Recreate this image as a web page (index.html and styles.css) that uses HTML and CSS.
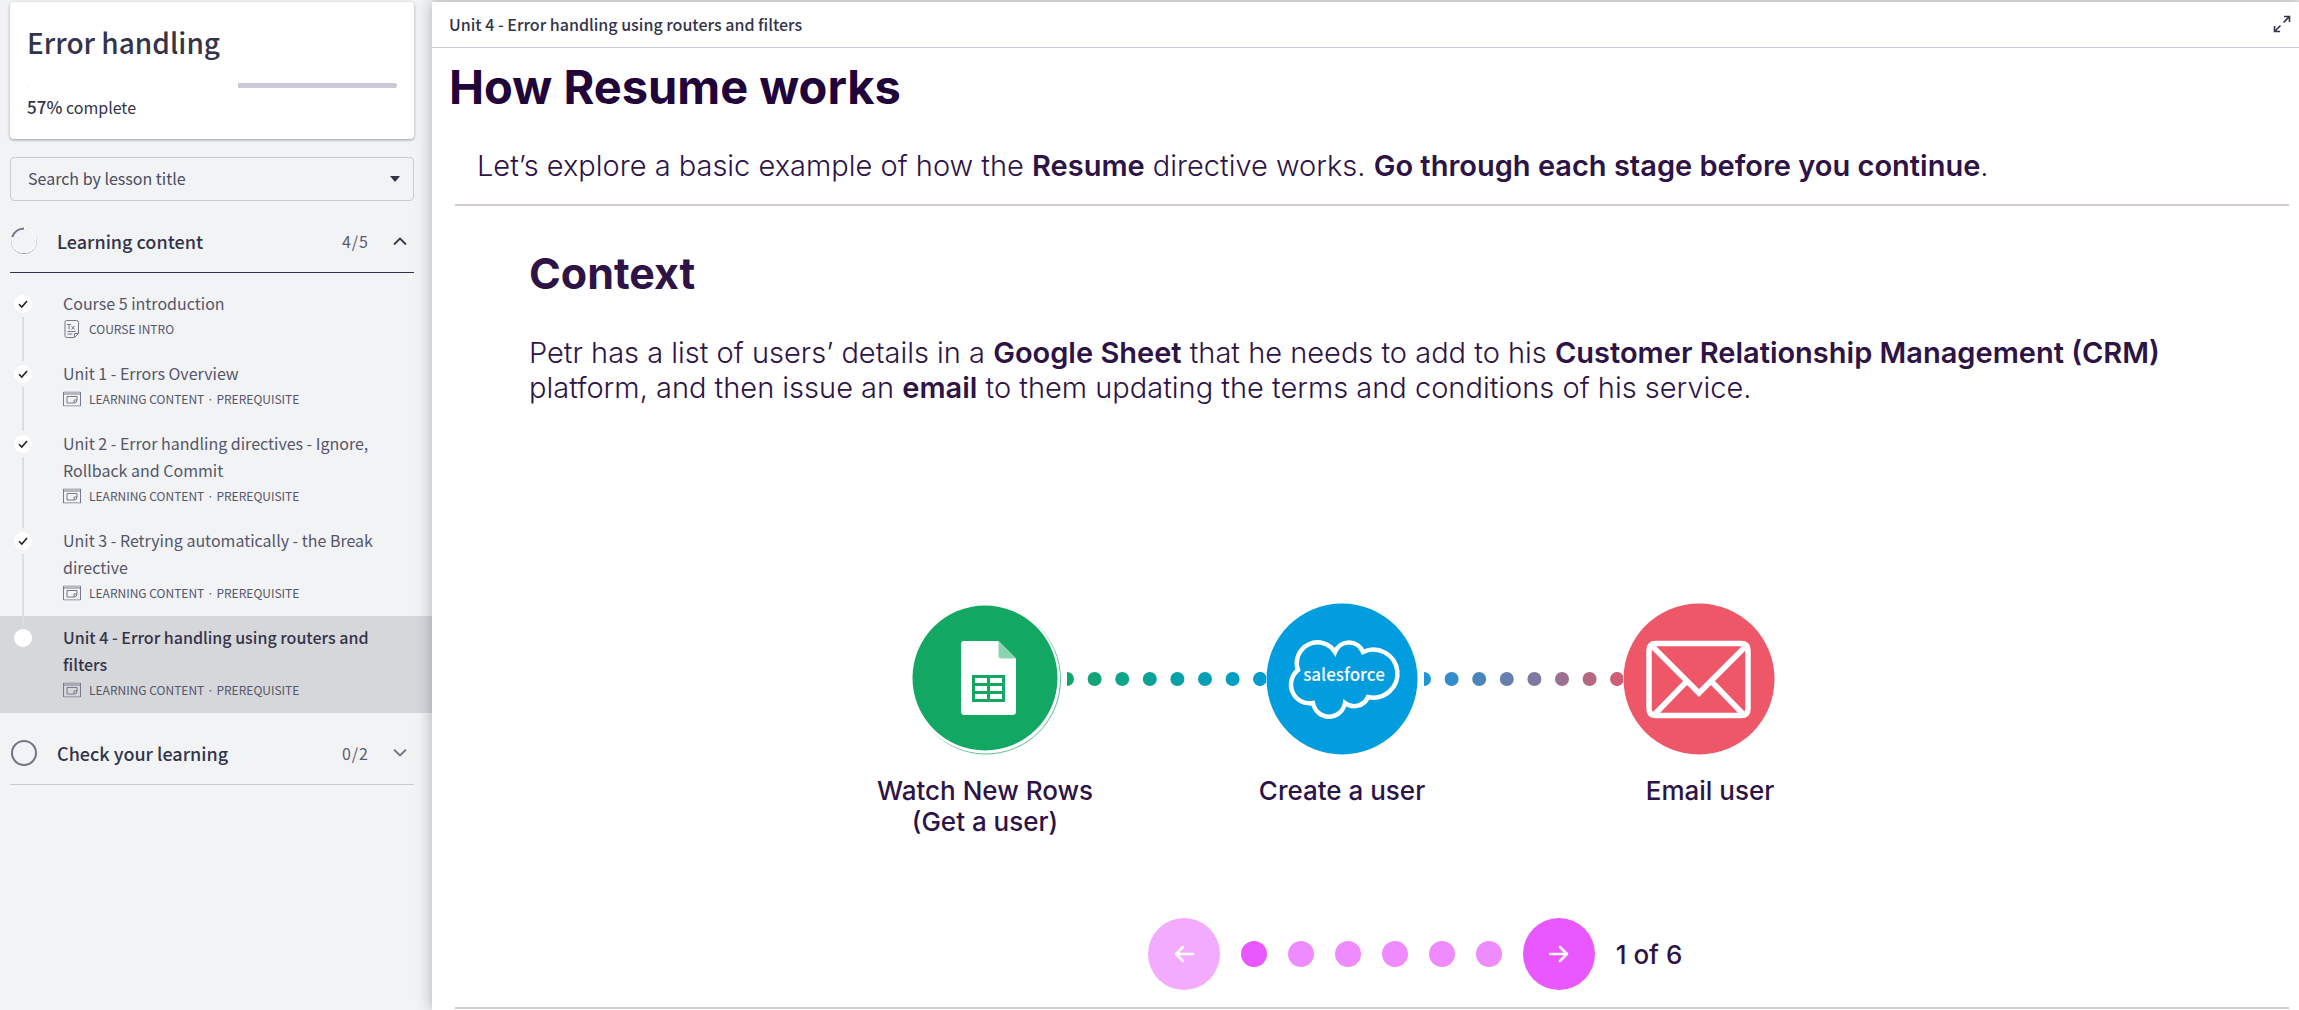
FILE: index.html
```html
<!DOCTYPE html>
<html lang="en">
<head>
<meta charset="utf-8">
<meta name="viewport" content="width=device-width, initial-scale=1">
<title>Error handling</title>
<link rel="stylesheet" href="styles.css">
</head>
<body>
<svg class="symbols" aria-hidden="true">
  <symbol id="check" viewBox="0 0 10 10"><path d="M1 5.2 3.8 8 9 2" fill="none" stroke="currentColor" stroke-width="1.6"/></symbol>
  <symbol id="slides" viewBox="0 0 18 15"><path d="M.5 .5h17v14H.5zM.5 2.5h17M4 5h10v3.500q0 3-3 3H4zM11 11.500v-3h3" fill="none" stroke="currentColor"/></symbol>
</svg>
<div class="layout">
  <aside class="sidebar">
    <section class="course">
      <h1 class="course-title">Error handling</h1>
      <progress class="course-bar" max="100" value="57" aria-label="Course progress"></progress>
      <p class="course-status"><b>57%</b> complete</p>
    </section>
    <div class="search">
      <select class="search-select" aria-label="Search by lesson title"><option>Search by lesson title</option></select>
      <svg class="search-caret" viewBox="0 0 10 6" aria-hidden="true"><path d="M0 0h10L5 6z" fill="currentColor"/></svg>
    </div>
    <button class="section section-open" type="button" aria-expanded="true">
      <svg class="ring" viewBox="0 0 28 28" aria-hidden="true"><circle cx="14" cy="14" r="12.500" fill="none" stroke="#8c8d9c"/><circle cx="14" cy="13.500" r="12" fill="none" stroke="#fff" stroke-width="1.500"/><path d="M2.300 10A12.500 12.500 0 0 1 14 1.500" fill="none" stroke="#727386" stroke-width="2"/></svg>
      <span class="section-name">Learning content</span>
      <span class="section-count">4/5</span>
      <svg class="chevron" viewBox="0 0 14 8" aria-hidden="true"><path d="M1 7.500 7 1.500l6 6" fill="none" stroke="currentColor" stroke-width="1.800"/></svg>
    </button>
    <ol class="lessons">
      <li><a class="lesson" href="#intro">
        <span class="track"><span class="mark"><svg viewBox="0 0 10 10"><use href="#check"/></svg></span></span>
        <span class="lesson-body"><span class="lesson-title">Course 5 introduction</span>
        <span class="meta"><svg class="meta-icon" viewBox="0 0 18 18"><path d="M3.500 .5h10q2 0 2 2v11l-4 4h-8q-1.500 0-1.500-1.500V2q0-1.500 1.500-1.500zM11.500 17v-3.500h4M4 4.500h4M6 4.500v5M8.500 6l3 3.500M11.500 6l-3 3.500M4.500 11.500h8M4.500 14h5" fill="none" stroke="currentColor"/></svg>COURSE INTRO</span></span></a></li>
      <li><a class="lesson" href="#unit1">
        <span class="track"><span class="mark"><svg viewBox="0 0 10 10"><use href="#check"/></svg></span></span>
        <span class="lesson-body"><span class="lesson-title">Unit 1 - Errors Overview</span>
        <span class="meta"><svg class="meta-icon" viewBox="0 0 18 15"><use href="#slides"/></svg>LEARNING CONTENT · PREREQUISITE</span></span></a></li>
      <li><a class="lesson" href="#unit2">
        <span class="track"><span class="mark"><svg viewBox="0 0 10 10"><use href="#check"/></svg></span></span>
        <span class="lesson-body"><span class="lesson-title">Unit 2 - Error handling directives - Ignore, Rollback and Commit</span>
        <span class="meta"><svg class="meta-icon" viewBox="0 0 18 15"><use href="#slides"/></svg>LEARNING CONTENT · PREREQUISITE</span></span></a></li>
      <li><a class="lesson" href="#unit3">
        <span class="track"><span class="mark"><svg viewBox="0 0 10 10"><use href="#check"/></svg></span></span>
        <span class="lesson-body"><span class="lesson-title">Unit 3 - Retrying automatically - the Break directive</span>
        <span class="meta"><svg class="meta-icon" viewBox="0 0 18 15"><use href="#slides"/></svg>LEARNING CONTENT · PREREQUISITE</span></span></a></li>
      <li><a class="lesson lesson-current" href="#unit4" aria-current="page">
        <span class="track"><span class="mark"></span></span>
        <span class="lesson-body"><span class="lesson-title">Unit 4 - Error handling using routers and filters</span>
        <span class="meta"><svg class="meta-icon" viewBox="0 0 18 15"><use href="#slides"/></svg>LEARNING CONTENT · PREREQUISITE</span></span></a></li>
    </ol>
    <button class="section" type="button" aria-expanded="false">
      <svg class="ring" viewBox="0 0 28 28" aria-hidden="true"><circle cx="14" cy="14" r="12" fill="none" stroke="#727386" stroke-width="2"/></svg>
      <span class="section-name">Check your learning</span>
      <span class="section-count">0/2</span>
      <svg class="chevron" viewBox="0 0 14 8" aria-hidden="true"><path d="M1 .5 7 6.500l6-6" fill="none" stroke="#727386" stroke-width="1.800"/></svg>
    </button>
  </aside>
  <main class="main">
    <header class="topbar">
      <span>Unit 4 - Error handling using routers and filters</span>
      <button class="expand" type="button" aria-label="Full screen"><svg viewBox="0 0 18 18"><path d="M10.500 7.500 16 2M11 1.500h5.500V7M7.500 10.500 2 16M1.500 11v5.500H7" fill="none" stroke="currentColor" stroke-width="1.600"/></svg></button>
    </header>
    <article class="content">
      <h2 class="page-title">How Resume works</h2>
      <p class="intro">Let’s explore a basic example of how the <b>Resume</b> directive works. <b>Go through each stage before you continue</b>.</p>
      <section class="stage">
        <div class="context">
          <h3 class="stage-title">Context</h3>
          <p class="stage-text">Petr has a list of users’ details in a <b>Google Sheet</b> that he needs to add to his <b>Customer Relationship Management (CRM)</b> platform, and then issue an <b>email</b> to them updating the terms and conditions of his service.</p>
        </div>
        <div class="flow">
          <figure class="step">
            <svg class="step-icon" viewBox="0 0 152 152" aria-hidden="true">
              <circle cx="77" cy="76.500" r="74.500" fill="#fff" stroke="#12a762" stroke-width=".7"/>
              <circle cx="75.500" cy="75" r="75" fill="#fff"/>
              <circle cx="76" cy="75" r="72.500" fill="#12a762"/>
              <path d="M54.500 38h35L107 55.500v53q0 3.500-3.500 3.500H55.500q-3.500 0-3.500-3.500V41.500q0-3.500 2.500-3.500z" fill="#fff"/>
              <path d="M89.500 38 107 55.500H93Q89.500 55.500 89.500 52z" fill="#8bd3b1"/>
              <path d="M63 72h33v27H63z" fill="#12a762"/>
              <path d="M66 75h12v5H66zM81 75h12v5H81zM66 83h12v5H66zM81 83h12v5H81zM66 91h12v5H66zM81 91h12v5H81z" fill="#fff"/>
            </svg>
            <figcaption>Watch New Rows<br>(Get a user)</figcaption>
          </figure>
          <svg class="link" viewBox="0 0 199 14" aria-hidden="true">
            <path d="M0 0a7 7 0 0 1 0 14z" fill="#12a768"/><circle cx="27.600" cy="7" r="7" fill="#11a679"/><circle cx="55.200" cy="7" r="7" fill="#0ea589"/><circle cx="82.800" cy="7" r="7" fill="#0ba398"/><circle cx="110.400" cy="7" r="7" fill="#08a1a7"/><circle cx="138" cy="7" r="7" fill="#05a0b5"/><circle cx="165.600" cy="7" r="7" fill="#039fc3"/><path d="M199 3.400a7 7 0 1 0 0 7.200z" fill="#019dd0"/>
          </svg>
          <figure class="step">
            <svg class="step-icon" viewBox="0 0 152 152" aria-hidden="true">
              <circle cx="76" cy="76" r="75.500" fill="#029ddf"/>
              <path d="M69 49A20.700 20.700 0 0 0 32 67A18.700 18.700 0 0 0 47 100A16.200 16.200 0 0 0 79 100A15 15 0 0 0 102 94A24 24 0 1 0 97 49A15 15 0 0 0 69 49Z" fill="none" stroke="#fff" stroke-width="4.500"/>
              <text class="brand" x="78" y="78" text-anchor="middle">salesforce</text>
            </svg>
            <figcaption>Create a user</figcaption>
          </figure>
          <svg class="link" viewBox="0 0 199 14" aria-hidden="true">
            <path d="M0 0a7 7 0 0 1 0 14z" fill="#1f96d6"/><circle cx="27.600" cy="7" r="7" fill="#328ecb"/><circle cx="55.200" cy="7" r="7" fill="#4a86bc"/><circle cx="82.800" cy="7" r="7" fill="#6680ae"/><circle cx="110.400" cy="7" r="7" fill="#81789f"/><circle cx="138" cy="7" r="7" fill="#9b7092"/><circle cx="165.600" cy="7" r="7" fill="#b56884"/><path d="M199 3.400a7 7 0 1 0 0 7.200z" fill="#cd6077"/>
          </svg>
          <figure class="step step-last">
            <svg class="step-icon" viewBox="0 0 152 152" aria-hidden="true">
              <circle cx="76" cy="76" r="75.500" fill="#ed5768"/>
              <path d="M33 40.500h85q7 0 7 7v58q0 7-7 7H33q-7 0-7-7v-58q0-7 7-7zM29 43 76 90l47-47M64 78 32 111M88 78l32 33" fill="none" stroke="#fff" stroke-width="5.500"/>
            </svg>
            <figcaption>Email user</figcaption>
          </figure>
        </div>
        <nav class="pager" aria-label="Stages">
          <button class="arrow arrow-off" type="button" aria-label="Previous" disabled><svg viewBox="0 0 20 18"><path d="M19 9H2M9 2 2 9l7 7" fill="none" stroke="currentColor" stroke-width="2.500" stroke-linecap="round" stroke-linejoin="round"/></svg></button>
          <button class="dot dot-on" type="button" aria-label="Stage 1"></button>
          <button class="dot" type="button" aria-label="Stage 2"></button>
          <button class="dot" type="button" aria-label="Stage 3"></button>
          <button class="dot" type="button" aria-label="Stage 4"></button>
          <button class="dot" type="button" aria-label="Stage 5"></button>
          <button class="dot" type="button" aria-label="Stage 6"></button>
          <button class="arrow" type="button" aria-label="Next"><svg viewBox="0 0 20 18"><path d="M1 9h17M11 2l7 7-7 7" fill="none" stroke="currentColor" stroke-width="2.500" stroke-linecap="round" stroke-linejoin="round"/></svg></button>
          <span>1 of 6</span>
        </nav>
      </section>
    </article>
  </main>
</div>
</body>
</html>
```
FILE: styles.css
```css
* { box-sizing: border-box; }
body { margin: 0; background: #e9e9e9; color: #333449; font-family: "Noto Sans CJK JP", "Noto Sans", sans-serif; font-size: 16px; }
h1, h2, h3, p, ol, figure { margin: 0; padding: 0; }
ol { list-style: none; }
button { border: 0; padding: 0; background: none; color: inherit; font: inherit; cursor: pointer; }
svg { display: block; flex: none; }
.symbols { display: none; }

.layout { display: grid; grid-template-columns: 432px minmax(0, 1fr); min-height: 100vh; }

.sidebar { background: #f1f3f5; padding-top: 2px; }
.course { margin: 0 18px 0 10px; padding: 18px 17px 19px 17px; border-radius: 4px; background: #fff; box-shadow: 0 1px 3px rgba(40, 42, 60, .45); }
.course-title { font-size: 28px; line-height: 44px; font-weight: 500; }
.course-bar { display: block; width: 100%; height: 5px; margin: 19px 0 6px; appearance: none; border: 0; border-radius: 2px; overflow: hidden; background: #c9cad5; }
.course-bar::-webkit-progress-bar { background: #c9cad5; }
.course-bar::-webkit-progress-value { background: #fff; }
.course-status { font-size: 16px; line-height: 26px; }
.course-status b { font-size: 17px; font-weight: 500; }

.search { display: grid; align-items: center; margin: 18px 18px 0 10px; }
.search > * { grid-area: 1 / 1; }
.search-select { width: 100%; height: 44px; padding: 0 17px 3px; appearance: none; border: 1px solid #c7c9d3; border-radius: 4px; background: transparent; color: #4b4c60; font: inherit; }
.search-caret { justify-self: end; width: 10px; height: 6px; margin-right: 14px; pointer-events: none; }

.section { display: flex; align-items: center; width: 404px; height: 64px; margin: 8px 18px 0 10px; border-bottom: 1px solid #c7c9d3; text-align: left; }
.section-open { border-bottom-color: #333449; }
.section-name { flex: 1; font-size: 18px; font-weight: 500; }
.section-count { margin-right: 24px; font-size: 16px; letter-spacing: 1px; color: #5b5c70; }
.ring { width: 28px; height: 28px; margin-right: 19px; }
.chevron { width: 14px; height: 8px; margin-right: 7px; }

.lessons { padding-top: 9px; }
.lesson { display: flex; padding: 8px 48px 11px 14px; color: #55566a; text-decoration: none; }
.lesson-current { background: #d6d7db; }
.track { position: relative; width: 18px; margin-right: 31px; flex: none; }
.mark { display: grid; place-items: center; width: 18px; height: 18px; margin-top: 5px; border-radius: 50%; background: #fff; color: #222; }
.mark svg { width: 10px; height: 10px; }
.track::after { content: ""; position: absolute; top: 27px; bottom: -20px; left: 8px; width: 2px; background: #dcdde1; }
.lesson-current .track::after { display: none; }
.lesson-title { display: block; font-size: 16px; line-height: 27px; }
.lesson-current .lesson-title { color: #333449; font-weight: 500; }
.meta { display: flex; align-items: center; gap: 8px; font-size: 12px; line-height: 24px; }
.meta-icon { width: 18px; height: 18px; color: #77788a; }

.main { position: relative; margin-top: 2px; background: #fff; box-shadow: 0 0 14px rgba(40, 42, 60, .35); color: #2d1346; font-family: Inter, "Liberation Sans", sans-serif; }
.topbar { display: flex; align-items: center; justify-content: space-between; height: 46px; padding: 0 8px 2px 17px; border-bottom: 1px solid #cbc9d8; color: #333449; font: 500 16px "Noto Sans CJK JP", "Noto Sans", sans-serif; }
.expand svg { width: 18px; height: 18px; }
.page-title { padding: 9px 17px 0; color: #210439; font-size: 47px; line-height: 60px; font-weight: 700; }
.intro { margin: 0 10px 0 23px; padding: 31px 22px 21px; border-bottom: 2px solid #d3cbd0; font-size: 29px; line-height: 35px; font-weight: 300; }
.intro b, .stage-text b { font-weight: 600; }
.stage { margin: 0 10px 0 23px; padding-bottom: 17px; border-bottom: 2px solid #d3cbd0; }
.context { padding: 42px 74px 0; }
.stage-title { font-size: 43px; line-height: 50px; font-weight: 700; }
.stage-text { margin-top: 37px; font-size: 29px; line-height: 35px; font-weight: 300; }
.flow { display: flex; justify-content: center; padding: 198px 60px 0 0; }
.step { display: flex; flex-direction: column; align-items: center; width: 152px; }
.step-icon { width: 152px; height: 152px; }
.step figcaption { padding-top: 20px; font-size: 26px; line-height: 31px; font-weight: 500; text-align: center; white-space: nowrap; }
.step-last figcaption { padding-left: 22px; }
.link { width: 199px; height: 14px; margin: 69px 0 0 6px; }
.brand { fill: #fff; font: 500 17px "Noto Sans CJK JP", "Noto Sans", sans-serif; }
.pager { display: flex; align-items: center; justify-content: center; gap: 21px; padding: 81px 0 0 86px; font-size: 26px; font-weight: 500; }
.arrow { display: grid; place-items: center; width: 72px; height: 72px; border-radius: 50%; background: #e857ff; color: #fff; }
.arrow-off { background: #f2abff; }
.arrow svg { width: 20px; height: 18px; }
.dot { width: 26px; height: 26px; border-radius: 50%; background: #ee8bff; }
.dot-on { background: #e857ff; }
```
